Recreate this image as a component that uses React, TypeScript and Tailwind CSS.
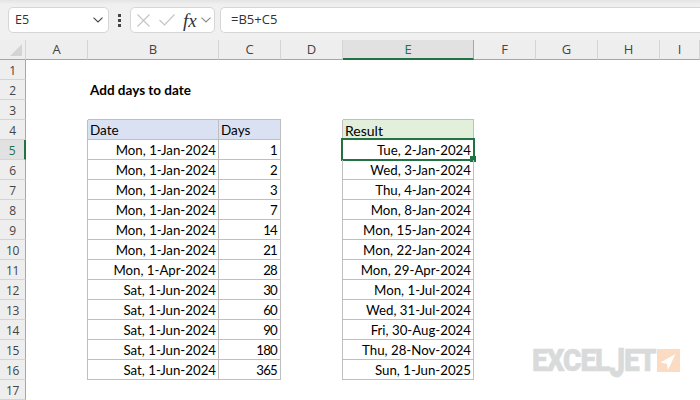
import React from "react";

const columns = ["A", "B", "C", "D", "E", "F", "G", "H", "I"];
const widths = [62, 131, 62, 62, 131, 62, 62, 62, 40];

const rows: [string, number, string][] = [
  ["Mon, 1-Jan-2024", 1, "Tue, 2-Jan-2024"],
  ["Mon, 1-Jan-2024", 2, "Wed, 3-Jan-2024"],
  ["Mon, 1-Jan-2024", 3, "Thu, 4-Jan-2024"],
  ["Mon, 1-Jan-2024", 7, "Mon, 8-Jan-2024"],
  ["Mon, 1-Jan-2024", 14, "Mon, 15-Jan-2024"],
  ["Mon, 1-Jan-2024", 21, "Mon, 22-Jan-2024"],
  ["Mon, 1-Apr-2024", 28, "Mon, 29-Apr-2024"],
  ["Sat, 1-Jun-2024", 30, "Mon, 1-Jul-2024"],
  ["Sat, 1-Jun-2024", 60, "Wed, 31-Jul-2024"],
  ["Sat, 1-Jun-2024", 90, "Fri, 30-Aug-2024"],
  ["Sat, 1-Jun-2024", 180, "Thu, 28-Nov-2024"],
  ["Sat, 1-Jun-2024", 365, "Sun, 1-Jun-2025"],
];

const line = "border-[#bfbfbf]";

function Cell({
  width,
  right,
  bottom,
  className = "",
  children,
}: {
  width: number;
  right?: boolean;
  bottom?: boolean;
  className?: string;
  children?: React.ReactNode;
}) {
  return (
    <div
      style={{ width }}
      className={`relative h-5 shrink-0 flex items-center whitespace-nowrap ${right ? `border-r ${line}` : ""} ${bottom ? `border-b ${line}` : ""} ${className}`}
    >
      {children}
    </div>
  );
}

function RowHead({ n, active }: { n: number; active?: boolean }) {
  return (
    <div
      className={`h-5 w-[26px] shrink-0 flex items-center justify-center pt-[2px] border-b border-[#d4d4d4] font-['Open_Sans',sans-serif] text-[12px] tracking-[-0.4px] ${
        active
          ? "bg-[#e1e1e1] border-r-2 border-r-[#217346] text-[#217346]"
          : "bg-[#eeeeee] border-r border-r-[#a6a6a6] text-[#444444]"
      }`}
    >
      {n}
    </div>
  );
}

function Chevron({ className }: { className: string }) {
  return (
    <svg viewBox="0 0 10 6" className={className} fill="none" stroke="currentColor" strokeWidth="1.1">
      <path d="M0.5 0.7 L5 5 L9.5 0.7" />
    </svg>
  );
}

function Toolbar() {
  return (
    <div className="h-10 bg-[#f0f0f0] bg-gradient-to-b from-[#e4e4e4] to-[#f0f0f0] to-[12%] flex items-start pt-[7px] pl-2 font-['Open_Sans',sans-serif] text-[#333333]">
      <div className="w-[101px] h-[26px] bg-white border border-[#d6d6d6] rounded-[5px] flex items-center justify-between pl-[6px] pr-[5px] text-[12.5px]">
        <span>E5</span>
        <Chevron className="w-[10px] h-[6px] text-[#444444]" />
      </div>
      <div className="w-[21px] h-[26px] flex flex-col items-center justify-center gap-[2px]">
        <span className="w-[3px] h-[3px] bg-[#444444]" />
        <span className="w-[3px] h-[3px] bg-[#444444]" />
        <span className="w-[3px] h-[3px] bg-[#444444]" />
      </div>
      <div className="w-[85px] h-[26px] bg-white border border-[#d6d6d6] rounded-[5px] flex items-center pl-[6px]">
        <svg viewBox="0 0 13 13" className="w-[13px] h-[13px] text-[#c4c4c4]" fill="none" stroke="currentColor" strokeWidth="1.1">
          <path d="M0.5 0.5 L12.5 12.5 M12.5 0.5 L0.5 12.5" />
        </svg>
        <svg viewBox="0 0 16 12" className="ml-[9px] w-4 h-3 text-[#c4c4c4]" fill="none" stroke="currentColor" strokeWidth="1.1">
          <path d="M0.5 6 L5.5 11 L15.5 0.5" />
        </svg>
        <span className="ml-[8px] font-['Liberation_Serif',serif] italic text-[19px] text-[#333333] leading-none">fx</span>
        <Chevron className="ml-[4px] w-[10px] h-[6px] text-[#8a8a8a]" />
      </div>
      <div className="ml-[5px] flex-1 h-[26px] bg-white border border-r-0 border-[#d6d6d6] rounded-l-[5px] flex items-center pl-[10px] text-[13px]">
        =B5+C5
      </div>
    </div>
  );
}

function ColumnHeader() {
  return (
    <div className="flex h-5 font-['Open_Sans',sans-serif] text-[13px] text-[#444444]">
      <div className="w-[26px] shrink-0 bg-[#eeeeee] border-r border-b border-b-[#a6a6a6] border-r-[#d4d4d4] flex items-end justify-end pr-[3px] pb-[3px]">
        <svg viewBox="0 0 12 12" className="w-3 h-3">
          <path d="M12 0 V12 H0 Z" fill="#d4d4d4" />
        </svg>
      </div>
      {columns.map((c, i) =>
        c === "E" ? (
          <div
            key={c}
            style={{ width: widths[i] }}
            className="shrink-0 bg-[#e1e1e1] border-b-2 border-b-[#217346] border-r border-r-[#a6a6a6] text-[#217346] flex items-center justify-center pt-[2px]"
          >
            {c}
          </div>
        ) : (
          <div
            key={c}
            style={{ width: widths[i] }}
            className="shrink-0 bg-[#eeeeee] border-b border-b-[#a6a6a6] border-r border-r-[#d4d4d4] flex items-center justify-center pt-px"
          >
            {c}
          </div>
        )
      )}
    </div>
  );
}

function Trailing() {
  return (
    <>
      {widths.slice(5).map((w, i) => (
        <Cell key={i} width={w} />
      ))}
    </>
  );
}

function Sheet() {
  const num = "justify-end pt-[2px] pr-[2px] text-[13.25px]";
  const days = "justify-end pt-[2px] pr-[3px] text-[13.25px] tracking-[-0.8px]";
  const head = "pl-[2px] pt-[2px]";
  return (
    <div className="bg-white font-['Lato',sans-serif] text-[13.5px] text-black">
      <div className="flex">
        <RowHead n={1} />
      </div>
      <div className="flex">
        <RowHead n={2} />
        <Cell width={62} />
        <Cell width={131} className="pl-[2px] pt-px font-bold">Add days to date</Cell>
      </div>
      <div className="flex">
        <RowHead n={3} />
        <Cell width={62} />
        <Cell width={131} bottom />
        <Cell width={62} bottom />
        <Cell width={62} />
        <Cell width={131} bottom />
      </div>
      <div className="flex">
        <RowHead n={4} />
        <Cell width={62} right />
        <Cell width={131} right bottom className={`${head} bg-[#d9e1f2]`}>Date</Cell>
        <Cell width={62} right bottom className={`${head} bg-[#d9e1f2]`}>Days</Cell>
        <Cell width={62} right />
        <Cell width={131} right bottom className={`${head} bg-[#e2efda] text-[14px]`}>Result</Cell>
      </div>
      {rows.map(([date, dayCount, result], i) => (
        <div className="flex" key={i}>
          <RowHead n={i + 5} active={i === 0} />
          <Cell width={62} right />
          <Cell width={131} right bottom className={num}>{date}</Cell>
          <Cell width={62} right bottom className={days}>{dayCount}</Cell>
          <Cell width={62} right />
          <Cell width={131} right bottom className={num}>
            {result}
            {i === 0 && (
              <>
                <span className="absolute -left-[2px] -top-[2px] -right-[2px] -bottom-[2px] border-2 border-[#217346]" />
                <span className="absolute -right-[3px] -bottom-[3px] w-[6px] h-[6px] bg-[#217346]" />
              </>
            )}
          </Cell>
          <Trailing />
        </div>
      ))}
      <div className="flex">
        <RowHead n={17} />
      </div>
    </div>
  );
}

function Watermark() {
  return (
    <div className="absolute left-[532px] top-[349px] flex items-start gap-[2px]">
      <div className="w-[123px] h-[23px]">
        <span className="inline-block origin-top-left scale-x-[0.88] font-['Roboto',sans-serif] font-black text-[32px] leading-[23px] tracking-[-1.3px] [-webkit-text-stroke:0.6px_#d9dbdb] text-[#d9dbdb] whitespace-nowrap">
          EXCEL
          <span className="inline-block origin-top scale-y-[1.25]">J</span>
          ET
        </span>
      </div>
      <svg viewBox="0 0 23 23" className="w-[23px] h-[23px]">
        <rect width="23" height="23" fill="#fbdcc3" />
        <path d="M18.5 5 L3.5 13.5 L10 15 L11 21 Z" fill="#ffffff" />
      </svg>
    </div>
  );
}

export default function App() {
  return (
    <div className="relative w-[700px] h-[400px] overflow-hidden bg-white">
      <Toolbar />
      <ColumnHeader />
      <Sheet />
      <Watermark />
    </div>
  );
}
